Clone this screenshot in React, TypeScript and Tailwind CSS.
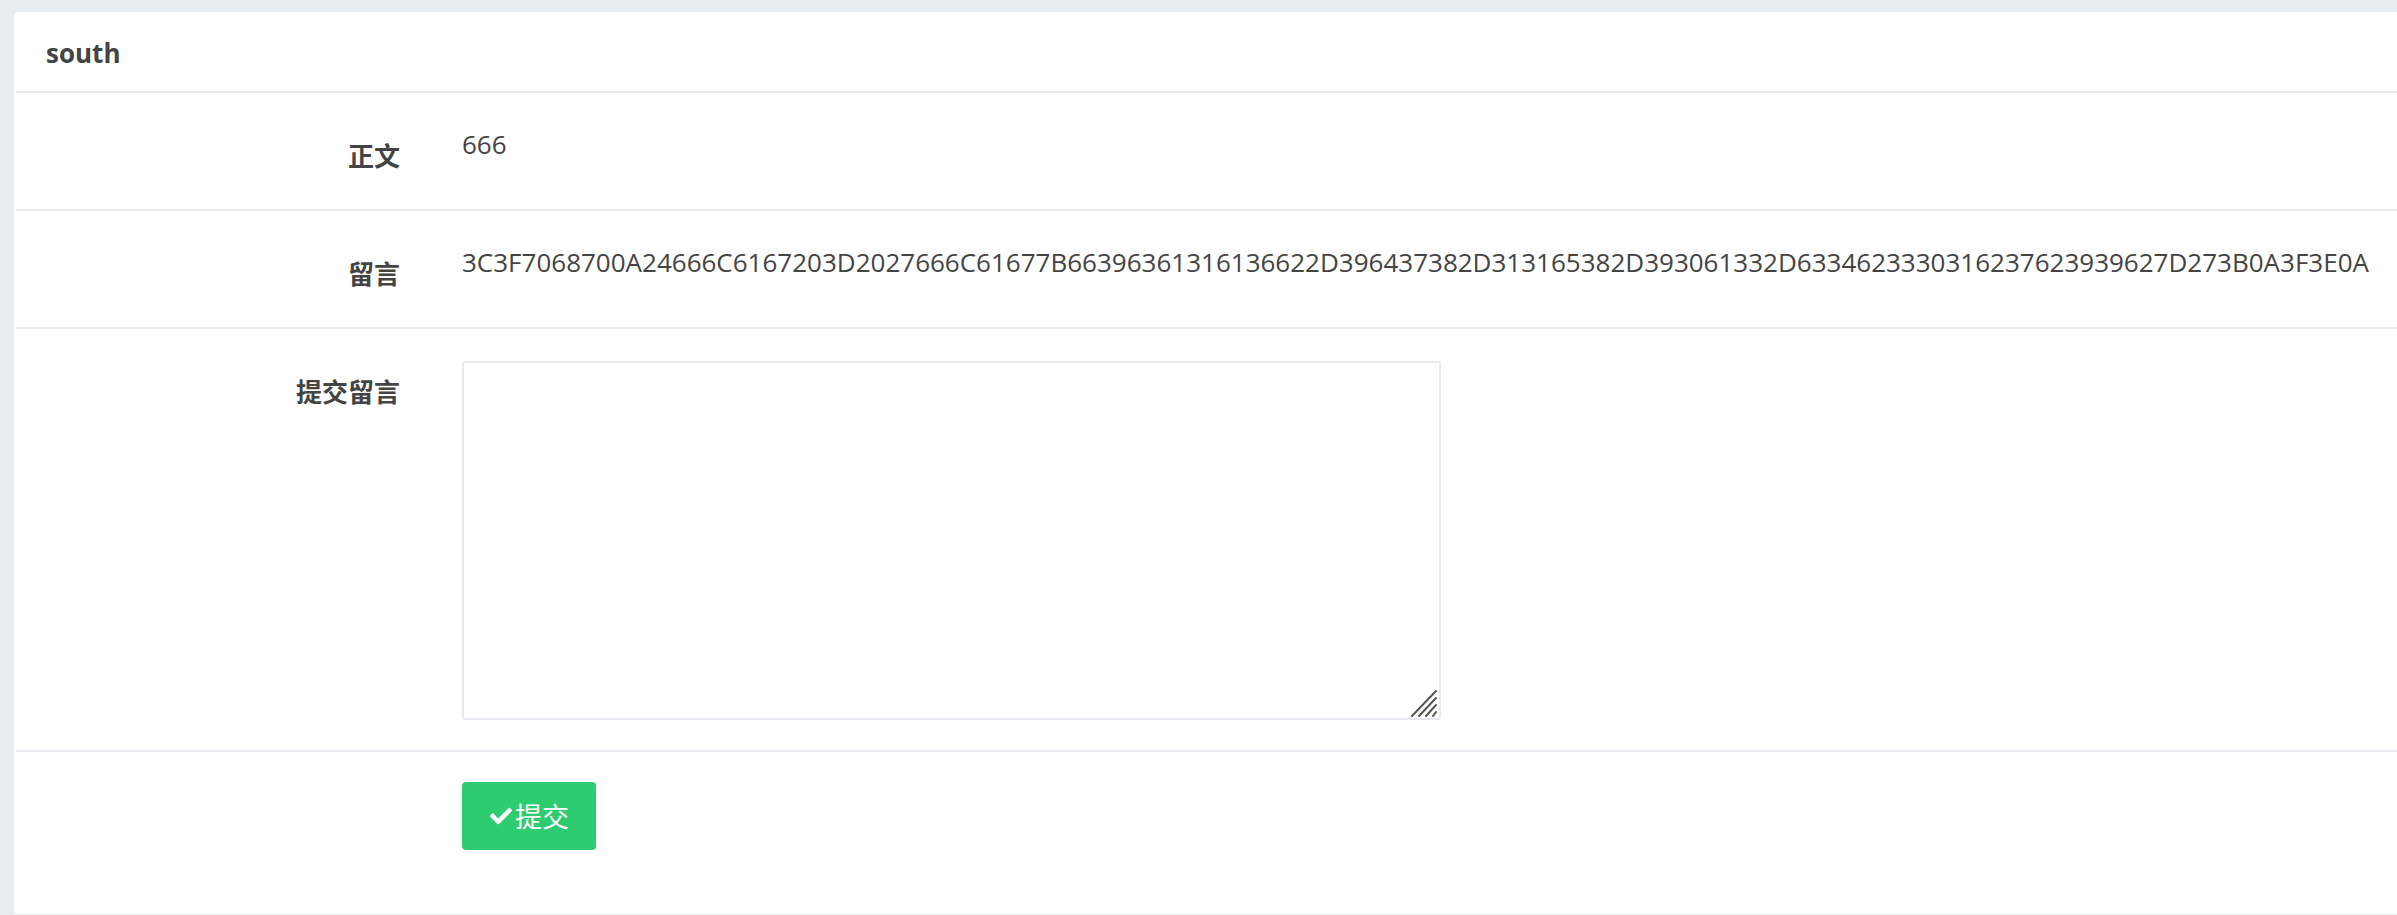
import React from "react";
import { FaCheck } from "react-icons/fa";

const HEX =
  "3C3F7068700A24666C6167203D2027666C61677B66396361316136622D396437382D313165382D393061332D6334623330316237623939627D273B0A3F3E0A";

function Row({
  label,
  children,
  pb = "pb-[32px]",
}: {
  label: string;
  children?: React.ReactNode;
  pb?: string;
}) {
  return (
    <div className={`ml-[2px] flex border-b-2 border-[#e8ecf1] pt-[30px] ${pb}`}>
      <div className="w-[384px] shrink-0 pt-[12px] text-right text-[26px] font-bold leading-[42px] text-[#444]">
        {label}
      </div>
      <div className="ml-[62px] min-w-0 flex-1">{children}</div>
    </div>
  );
}

export default function App() {
  return (
    <div
      className="h-[915px] w-full overflow-hidden bg-[#e9edf1] pl-[14px] pt-[12px]"
      style={{ fontFamily: '"Open Sans", "Noto Sans CJK SC", sans-serif' }}
    >
      <div className="h-[902px] rounded-l-[4px] bg-white">
        <div className="ml-[2px] border-b-2 border-[#e8ecf1] pb-[17px] pl-[30px] pt-[20px] text-[26px] font-bold leading-[42px] text-[#444]">
          south
        </div>
        <Row label="正文">
          <div className="text-[26px] leading-[42px] text-[#444]">666</div>
        </Row>
        <Row label="留言">
          <div className="whitespace-nowrap text-[26px] leading-[42px] text-[#444]">{HEX}</div>
        </Row>
        <Row label="提交留言" pb="pb-[30px]">
          <div className="relative mt-[2px] h-[359px] w-[979px]">
            <textarea className="block h-full w-full resize-none rounded-[3px] border-2 border-[#e6e9f0] bg-white outline-none" />
            <svg
              className="pointer-events-none absolute bottom-[3px] right-[3px]"
              width="28"
              height="28"
              viewBox="0 0 28 28"
            >
              <g stroke="#555" strokeWidth="2" strokeLinecap="round">
                <line x1="2" y1="27" x2="26" y2="2" />
                <line x1="9" y1="27" x2="26" y2="9" />
                <line x1="16" y1="27" x2="26" y2="16" />
                <line x1="23" y1="27" x2="26" y2="23" />
              </g>
            </svg>
          </div>
        </Row>
        <div className="ml-[2px] flex pt-[30px]">
          <div className="w-[384px] shrink-0" />
          <div className="ml-[62px]">
            <button className="flex h-[68px] items-center rounded-[4px] bg-[#2ecc71] pl-[28px] pr-[27px] text-[27px] leading-none text-white">
              <FaCheck className="mr-[3px] h-[22px] w-[22px]" />
              <span>提交</span>
            </button>
          </div>
        </div>
      </div>
    </div>
  );
}
